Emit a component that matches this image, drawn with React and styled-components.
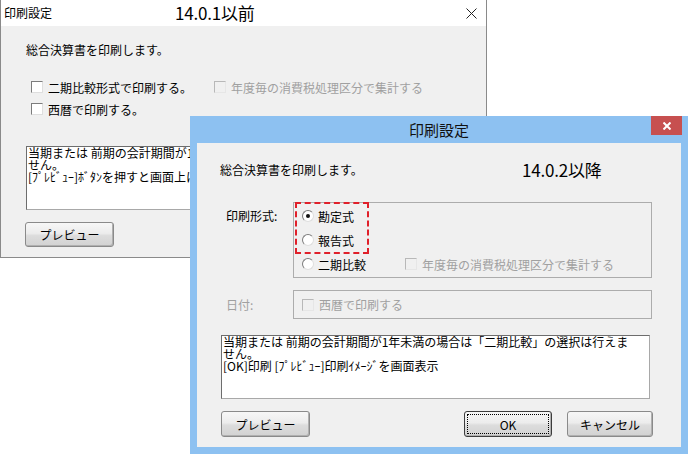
import React from 'react';
import styled, { createGlobalStyle } from 'styled-components';

const GlobalStyle = createGlobalStyle`
  html, body { margin: 0; padding: 0; background: #fff; }
  body {
    font-family: "Noto Sans CJK JP", "Noto Sans", sans-serif;
    font-size: 12px;
    color: #000;
  }
`;

const Desktop = styled.div`
  position: relative;
  width: 690px;
  height: 454px;
  overflow: hidden;
  background: #fff;
`;

/* ---- 14.0.1 window (behind) ---- */

const OldWindow = styled.div`
  position: absolute;
  left: 0;
  top: 0;
  width: 487px;
  height: 258px;
  box-sizing: border-box;
  border: 1px solid #8a8a8a;
  border-top: none;
  display: flex;
  flex-direction: column;
  background: #f0f0f0;
`;

const OldTitleBar = styled.div`
  height: 26px;
  flex: none;
  background: #fff;
  display: grid;
  grid-template-columns: 171px 1fr auto;
  align-items: center;
  padding: 0 9px 0 3px;
`;

const Caption = styled.span`
  font-size: 12px;
  line-height: 16px;
`;

const Version = styled.span`
  font-size: 17px;
  line-height: 22px;
  letter-spacing: -0.2px;
`;

const OldBody = styled.div`
  flex: 1;
  display: flex;
  flex-direction: column;
  align-items: flex-start;
  padding-left: 24px;
`;

const Message = styled.div`
  line-height: 16px;
  margin: ${p => p.$top}px 0 0 ${p => p.$left || 0}px;
`;

const CheckLine = styled.div`
  display: flex;
  align-items: center;
  height: 22px;
  margin-top: ${p => p.$top || 0}px;
  padding-left: ${p => p.$indent || 0}px;
`;

const Option = styled.label`
  display: flex;
  align-items: center;
  gap: ${p => p.$gap || 5}px;
  margin-left: ${p => p.$offset || 0}px;
  color: ${p => (p.$disabled ? '#a0a0a0' : '#000')};
  white-space: nowrap;
`;

const CheckBox = styled.span`
  width: 12px;
  height: 12px;
  box-sizing: border-box;
  border: 1px solid;
  border-color: ${p => (p.$disabled ? '#b8b8b8 #e6e6e6 #e6e6e6 #b8b8b8' : '#7c7c7c #dedede #dedede #7c7c7c')};
  background: ${p => (p.$disabled ? '#f0f0f0' : '#fff')};
  flex: none;
`;

const Radio = styled.span`
  position: relative;
  width: 12px;
  height: 12px;
  box-sizing: border-box;
  border-radius: 50%;
  border: 1px solid;
  border-color: #7c7c7c #dedede #dedede #7c7c7c;
  background: #fff;
  flex: none;

  &::after {
    content: '';
    display: ${p => (p.$checked ? 'block' : 'none')};
    position: absolute;
    left: 3px;
    top: 3px;
    width: 4px;
    height: 4px;
    border-radius: 50%;
    background: #111;
  }
`;

const TextBox = styled.div`
  box-sizing: border-box;
  width: ${p => p.$width}px;
  height: 64px;
  margin: ${p => p.$top}px 0 0 ${p => p.$left || 0}px;
  border: 1px solid;
  border-color: #6d6d6d #a8a8a8 #a8a8a8 #6d6d6d;
  background: #fff;
  padding: 0 1px;
  font-size: 12px;
  line-height: 12px;
  white-space: nowrap;
  overflow: hidden;
`;

const Button = styled.button`
  box-sizing: border-box;
  width: ${p => p.$width}px;
  height: ${p => p.$height || 26}px;
  margin-top: ${p => p.$top || 0}px;
  border: 1px solid ${p => (p.$default ? '#3c3c3c' : '#8a8a8a')};
  border-radius: 3px;
  background: linear-gradient(#f7f7f7 0%, #ececec 45%, #dcdcdc 55%, #d2d2d2 100%);
  box-shadow: inset -1px -1px 0 #b0b0b0;
  font-family: inherit;
  font-size: 12px;
  color: #000;
  padding: 0;
  outline: ${p => (p.$default ? '1px dotted #000' : 'none')};
  outline-offset: -4px;
`;

const CloseGlyph = ({ color = '#222', size = 11, width = 1 }) => (
  <svg width={size} height={size} viewBox={`0 0 ${size} ${size}`}>
    <path d={`M0.5 0.5 L${size - 0.5} ${size - 0.5} M${size - 0.5} 0.5 L0.5 ${size - 0.5}`} stroke={color} strokeWidth={width} />
  </svg>
);

/* ---- 14.0.2 window (front) ---- */

const NewWindow = styled.div`
  position: absolute;
  left: 190px;
  top: 116px;
  width: 498px;
  height: 338px;
  box-sizing: border-box;
  background: #8dc1f1;
  padding: 0 7px 7px;
  display: flex;
  flex-direction: column;
`;

const NewTitleBar = styled.div`
  height: 27px;
  flex: none;
  margin: 0 -7px;
  padding: 0 6px;
  display: grid;
  grid-template-columns: 1fr auto 1fr;
`;

const WindowTitle = styled.span`
  font-size: 15px;
  line-height: 27px;
  color: #111;
`;

const CloseButton = styled.span`
  justify-self: end;
  width: 31px;
  height: 19px;
  background: #c75050;
  display: flex;
  align-items: center;
  justify-content: center;
`;

const Client = styled.div`
  flex: 1;
  background: #f0f0f0;
  padding: 0 28px 0 24px;
  display: flex;
  flex-direction: column;
`;

const Header = styled.div`
  display: grid;
  grid-template-columns: 301px auto;
  align-items: center;
  height: 22px;
  margin-top: 16px;
`;

const FieldRow = styled.div`
  display: flex;
  align-items: ${p => p.$align || 'flex-start'};
  margin-top: ${p => p.$top}px;
`;

const FieldLabel = styled.span`
  width: 72px;
  flex: none;
  box-sizing: border-box;
  padding-left: 5px;
  line-height: 24px;
  margin-top: ${p => p.$top || 0}px;
  color: ${p => (p.$disabled ? '#a0a0a0' : '#000')};
`;

const Group = styled.div`
  position: relative;
  box-sizing: border-box;
  width: 359px;
  height: ${p => p.$height}px;
  border: 1px solid #acacac;
  padding: ${p => p.$pad || '0'} 0 0 8px;
  display: flex;
  flex-direction: column;
  justify-content: ${p => p.$justify || 'flex-start'};
`;

const RadioLine = styled.div`
  display: flex;
  align-items: center;
  height: 24px;
`;

const Highlight = styled.div`
  position: absolute;
  left: 1px;
  top: -1px;
  width: 74px;
  height: 52px;
  box-sizing: border-box;
  border: 2px dashed #e0202a;
  pointer-events: none;
`;

const ButtonRow = styled.div`
  display: flex;
  gap: 15px;
  margin-top: 12px;
`;

const Spacer = styled.div`
  flex: 1;
`;

export default function App() {
  return (
    <Desktop>
      <GlobalStyle />

      <OldWindow>
        <OldTitleBar>
          <Caption>印刷設定</Caption>
          <Version>14.0.1以前</Version>
          <CloseGlyph />
        </OldTitleBar>
        <OldBody>
          <Message $top={16} $left={1}>総合決算書を印刷します。</Message>
          <CheckLine $top={18} $indent={6}>
            <Option><CheckBox />二期比較形式で印刷する。</Option>
            <Option $offset={22} $disabled><CheckBox $disabled />年度毎の消費税処理区分で集計する</Option>
          </CheckLine>
          <CheckLine $indent={6}>
            <Option><CheckBox />西暦で印刷する。</Option>
          </CheckLine>
          <TextBox $width={176} $top={26} $left={1}>
            当期または 前期の会計期間が1年<br />
            せん。<br />
            [ﾌﾟﾚﾋﾞｭｰ]ﾎﾞﾀﾝを押すと画面上に
          </TextBox>
          <Button $width={89} $height={25} $top={12}>プレビュー</Button>
        </OldBody>
      </OldWindow>

      <NewWindow>
        <NewTitleBar>
          <span />
          <WindowTitle>印刷設定</WindowTitle>
          <CloseButton>
            <CloseGlyph color="#fff" size={8} width={2} />
          </CloseButton>
        </NewTitleBar>
        <Client>
          <Header>
            <Message $top={0} $left={-1}>総合決算書を印刷します。</Message>
            <Version>14.0.2以降</Version>
          </Header>

          <FieldRow $top={21}>
            <FieldLabel $top={2}>印刷形式:</FieldLabel>
            <Group $height={76} $pad="1px">
              <RadioLine>
                <Option $gap={4}><Radio $checked />勘定式</Option>
              </RadioLine>
              <RadioLine>
                <Option $gap={4}><Radio />報告式</Option>
              </RadioLine>
              <RadioLine>
                <Option $gap={4}><Radio />二期比較</Option>
                <Option $offset={39} $disabled><CheckBox $disabled />年度毎の消費税処理区分で集計する</Option>
              </RadioLine>
              <Highlight />
            </Group>
          </FieldRow>

          <FieldRow $top={12} $align="center">
            <FieldLabel $disabled>日付:</FieldLabel>
            <Group $height={29} $justify="center">
              <Option $disabled><CheckBox $disabled />西暦で印刷する</Option>
            </Group>
          </FieldRow>

          <TextBox $width={429} $top={16}>
            当期または 前期の会計期間が1年未満の場合は「二期比較」の選択は行えま<br />
            せん。<br />
            [OK]印刷 [ﾌﾟﾚﾋﾞｭｰ]印刷ｲﾒｰｼﾞを画面表示
          </TextBox>

          <ButtonRow>
            <Button $width={89}>プレビュー</Button>
            <Spacer />
            <Button $width={88} $default>OK</Button>
            <Button $width={86}>キャンセル</Button>
          </ButtonRow>
        </Client>
      </NewWindow>
    </Desktop>
  );
}
